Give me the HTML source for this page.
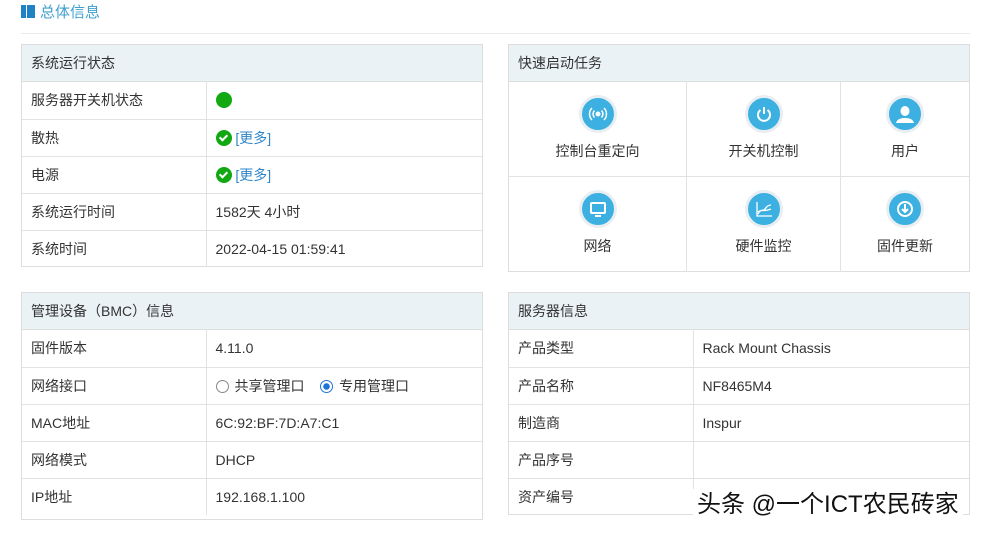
<!DOCTYPE html>
<html><head><meta charset="utf-8"><style>
*{margin:0;padding:0;box-sizing:border-box}
body{width:982px;height:535px;background:#fff;font-family:"Liberation Sans","Noto Sans CJK SC",sans-serif;font-size:14px;color:#333;position:relative;overflow:hidden}
.title{position:absolute;left:21px;top:4px;color:#3fa0d0;font-size:15px;line-height:18px}
.title i{display:inline-block;width:14px;height:13px;vertical-align:-1px;margin-right:5px;background:linear-gradient(90deg,#1f82c4 0 5px,transparent 5px 6px,#1f82c4 6px);}
.hr{position:absolute;left:21px;right:12px;top:33px;height:1px;background:#eaeaea}
.p{position:absolute;border:1px solid #ddd}
.h{height:37px;line-height:36px;background:#eaf2f6;padding-left:9px;border-bottom:1px solid #ddd}
table{border-collapse:collapse;width:100%}
td{height:37px;border-top:1px solid #e2e2e2;padding-left:9px;vertical-align:middle}
tr:first-child td{border-top:none}
td+td{border-left:1px solid #e2e2e2}
.g{display:inline-block;width:16px;height:16px;border-radius:50%;background:#12a812;vertical-align:-3px}
.c{position:relative}
.c:after{content:"";position:absolute;left:5px;top:3px;width:3px;height:6px;border:solid #fff;border-width:0 2px 2px 0;transform:rotate(45deg)}
a{color:#2f86c8}
.grid{display:grid;grid-template-columns:178px 154px 128px;grid-template-rows:95px 95px}
.cell{text-align:center;border-right:1px solid #e2e2e2;border-bottom:1px solid #e2e2e2;padding-top:13px}
.cell:nth-child(3n){border-right:none}.cell:nth-child(n+4){border-bottom:none}
.ic{width:38px;height:38px;border-radius:50%;background:#3cb0e0;border:3px solid #e8eef2;margin:0 auto 8px;display:flex;align-items:center;justify-content:center}
.r{display:inline-block;width:13px;height:13px;border:1px solid #888;border-radius:50%;vertical-align:-2px;margin-right:6px}
.r.on{border-color:#1d74d8;background:radial-gradient(#1d74d8 0 3px,#fff 3.5px)}
.wm{position:absolute;left:693px;top:489px;font-size:24px;color:#111;background:#fff;padding:0 4px;line-height:31px}
</style></head><body>
<div class="title"><i></i>总体信息</div>
<div class="hr"></div>

<div class="p" style="left:21px;top:44px;width:462px;height:223px">
<div class="h">系统运行状态</div>
<table><col style="width:184px"><col>
<tr><td>服务器开关机状态</td><td><span class="g"></span></td></tr>
<tr><td>散热</td><td><span class="g c"></span> <a>[更多]</a></td></tr>
<tr><td>电源</td><td><span class="g c"></span> <a>[更多]</a></td></tr>
<tr><td>系统运行时间</td><td>1582天 4小时</td></tr>
<tr><td>系统时间</td><td>2022-04-15 01:59:41</td></tr>
</table></div>

<div class="p" style="left:21px;top:292px;width:462px;height:228px">
<div class="h">管理设备（BMC）信息</div>
<table><col style="width:184px"><col>
<tr><td>固件版本</td><td>4.11.0</td></tr>
<tr><td>网络接口</td><td><span class="r"></span>共享管理口 &nbsp;&nbsp;&nbsp;<span class="r on"></span>专用管理口</td></tr>
<tr><td>MAC地址</td><td>6C:92:BF:7D:A7:C1</td></tr>
<tr><td>网络模式</td><td>DHCP</td></tr>
<tr><td>IP地址</td><td>192.168.1.100</td></tr>
</table></div>

<div class="p" style="left:508px;top:44px;width:462px;height:228px">
<div class="h">快速启动任务</div>
<div class="grid">
<div class="cell"><div class="ic"><svg width="20" height="20" viewBox="0 0 20 20" fill="none" stroke="#fff" stroke-width="1.5"><circle cx="10" cy="10" r="1.8" fill="#fff"/><path d="M6.5 6.5a5 5 0 0 0 0 7M13.5 6.5a5 5 0 0 1 0 7M4 4a8.5 8.5 0 0 0 0 12M16 4a8.5 8.5 0 0 1 0 12"/></svg></div>控制台重定向</div>
<div class="cell"><div class="ic"><svg width="20" height="20" viewBox="0 0 20 20" fill="none" stroke="#fff" stroke-width="2"><path d="M6.5 6a6 6 0 1 0 7 0M10 3v7"/></svg></div>开关机控制</div>
<div class="cell"><div class="ic"><svg width="22" height="22" viewBox="0 0 22 22" fill="#fff"><ellipse cx="11" cy="8" rx="4.5" ry="5"/><path d="M2 20c1-4 5-5 9-5s8 1 9 5z"/></svg></div>用户</div>
<div class="cell"><div class="ic"><svg width="20" height="20" viewBox="0 0 20 20" fill="none" stroke="#fff" stroke-width="2"><rect x="3" y="4" width="14" height="10" rx="1"/><path d="M7 17h6"/></svg></div>网络</div>
<div class="cell"><div class="ic"><svg width="20" height="20" viewBox="0 0 20 20" fill="none" stroke="#fff" stroke-width="1.3"><path d="M3 3v14h15M4 15c3-6 5-2 7-5s4-4 6-4M4 13c3-3 6 0 13-3"/></svg></div>硬件监控</div>
<div class="cell"><div class="ic"><svg width="20" height="20" viewBox="0 0 20 20" fill="none" stroke="#fff" stroke-width="2"><circle cx="10" cy="10" r="7"/><path d="M10 5v8M7 10l3 3 3-3"/></svg></div>固件更新</div>
</div></div>

<div class="p" style="left:508px;top:292px;width:462px;height:223px">
<div class="h">服务器信息</div>
<table><col style="width:184px"><col>
<tr><td>产品类型</td><td>Rack Mount Chassis</td></tr>
<tr><td>产品名称</td><td>NF8465M4</td></tr>
<tr><td>制造商</td><td>Inspur</td></tr>
<tr><td>产品序号</td><td></td></tr>
<tr><td>资产编号</td><td></td></tr>
</table></div>
<div class="wm">头条 @一个ICT农民砖家</div>
</body></html>
